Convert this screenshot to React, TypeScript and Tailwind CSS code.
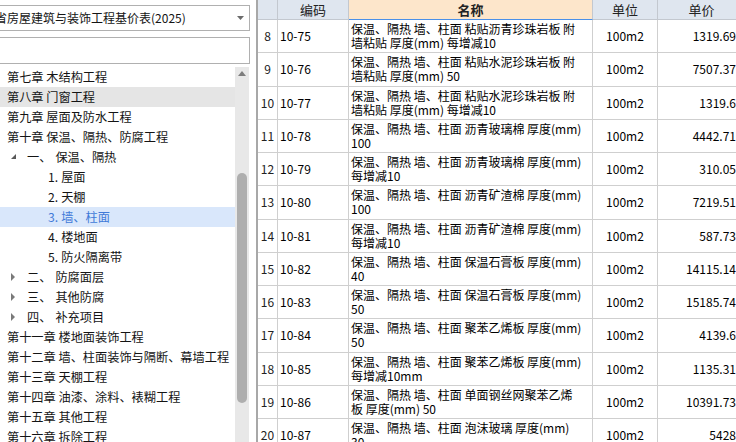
import React from "react";

type TreeItem = {
  text: string;
  num?: string;
  level: 0 | 1 | 2;
  state?: "open" | "closed";
  sel?: "hover" | "active";
};

const tree: TreeItem[] = [
  { text: "第七章 木结构工程", level: 0 },
  { text: "第八章 门窗工程", level: 0, sel: "hover" },
  { text: "第九章 屋面及防水工程", level: 0 },
  { text: "第十章 保温、隔热、防腐工程", level: 0 },
  { num: "一、", text: "保温、隔热", level: 1, state: "open" },
  { num: "1.", text: "屋面", level: 2 },
  { num: "2.", text: "天棚", level: 2 },
  { num: "3.", text: "墙、柱面", level: 2, sel: "active" },
  { num: "4.", text: "楼地面", level: 2 },
  { num: "5.", text: "防火隔离带", level: 2 },
  { num: "二、", text: "防腐面层", level: 1, state: "closed" },
  { num: "三、", text: "其他防腐", level: 1, state: "closed" },
  { num: "四、", text: "补充项目", level: 1, state: "closed" },
  { text: "第十一章 楼地面装饰工程", level: 0 },
  { text: "第十二章 墙、柱面装饰与隔断、幕墙工程", level: 0 },
  { text: "第十三章 天棚工程", level: 0 },
  { text: "第十四章 油漆、涂料、裱糊工程", level: 0 },
  { text: "第十五章 其他工程", level: 0 },
  { text: "第十六章 拆除工程", level: 0 },
];

const rows: [string, string, string, string, string][] = [
  ["8", "10-75", "保温、隔热 墙、柱面 粘贴沥青珍珠岩板 附", "墙粘贴 厚度(mm) 每增减10", "1319.69"],
  ["9", "10-76", "保温、隔热 墙、柱面 粘贴水泥珍珠岩板 附", "墙粘贴 厚度(mm) 50", "7507.37"],
  ["10", "10-77", "保温、隔热 墙、柱面 粘贴水泥珍珠岩板 附", "墙粘贴 厚度(mm) 每增减10", "1319.6"],
  ["11", "10-78", "保温、隔热 墙、柱面 沥青玻璃棉 厚度(mm)", "100", "4442.71"],
  ["12", "10-79", "保温、隔热 墙、柱面 沥青玻璃棉 厚度(mm)", "每增减10", "310.05"],
  ["13", "10-80", "保温、隔热 墙、柱面 沥青矿渣棉 厚度(mm)", "100", "7219.51"],
  ["14", "10-81", "保温、隔热 墙、柱面 沥青矿渣棉 厚度(mm)", "每增减10", "587.73"],
  ["15", "10-82", "保温、隔热 墙、柱面 保温石膏板 厚度(mm)", "40", "14115.14"],
  ["16", "10-83", "保温、隔热 墙、柱面 保温石膏板 厚度(mm)", "50", "15185.74"],
  ["17", "10-84", "保温、隔热 墙、柱面 聚苯乙烯板 厚度(mm)", "50", "4139.6"],
  ["18", "10-85", "保温、隔热 墙、柱面 聚苯乙烯板 厚度(mm)", "每增减10mm", "1135.31"],
  ["19", "10-86", "保温、隔热 墙、柱面 单面钢丝网聚苯乙烯", "板 厚度(mm) 50", "10391.73"],
  ["20", "10-87", "保温、隔热 墙、柱面 泡沫玻璃 厚度(mm)", "30", "5428"],
];

function Tri({ state }: { state: "open" | "closed" }) {
  if (state === "open") {
    return (
      <svg width="6" height="6" viewBox="0 0 6 6" className="absolute left-[11px] top-[7px]">
        <polygon points="5,0 5,5 0,5" fill="#595959" />
      </svg>
    );
  }
  return (
    <svg width="5" height="8" viewBox="0 0 5 8" className="absolute left-[11px] top-[6px]">
      <polygon points="0,0 4,4 0,8" fill="#7a7a7a" />
    </svg>
  );
}

function TreeRow({ item }: { item: TreeItem }) {
  const bg =
    item.sel === "hover" ? "bg-[#e5e5e5]" : item.sel === "active" ? "bg-[#d9e7fb]" : "";
  const color = item.sel === "active" ? "text-[#3f7ad8]" : "text-[#141414]";
  return (
    <div className={`relative h-[20px] leading-[20px] whitespace-nowrap ${bg} ${color}`}>
      {item.level === 0 && <span className="pl-[7px]">{item.text}</span>}
      {item.level === 1 && (
        <>
          {item.state && <Tri state={item.state} />}
          <span className="pl-[27px]">{item.num}</span>
          <span className="pl-[4px]">{item.text}</span>
        </>
      )}
      {item.level === 2 && (
        <>
          <span className="pl-[48px]">{item.num}</span>
          <span className="pl-[3px]">{item.text}</span>
        </>
      )}
    </div>
  );
}

export default function App() {
  return (
    <div className="w-[736px] h-[442px] flex overflow-hidden bg-white">
      {/* Left panel */}
      <div className="w-[256px] shrink-0 flex flex-col overflow-hidden font-['Noto_Sans_CJK_SC',sans-serif] text-[12px]">
        <div className="w-[250px] pt-[5px] overflow-hidden">
          <div className="relative -ml-[40px] w-[290px] h-[26px] border border-[#b0b0b0] bg-white flex items-center pl-[10px] text-[#141414] text-[12px] whitespace-nowrap">
            湖南省房屋建筑与装饰工程基价表(2025)
            <svg width="7" height="4" viewBox="0 0 7 4" className="absolute right-[5px] top-[10px]">
              <polygon points="0,0 7,0 3.5,4" fill="#6b6b6b" />
            </svg>
          </div>
          <div className="mt-[6px] -ml-[10px] w-[260px] h-[27px] border border-[#b0b0b0] bg-white" />
        </div>
        <div className="mt-[3px] flex flex-1 min-h-0 w-[250px]">
          <div className="w-[235px] flex flex-col text-[12.2px]">
            {tree.map((it, i) => (
              <TreeRow key={i} item={it} />
            ))}
          </div>
          <div className="w-[14px] bg-[#e8e8e8] flex flex-col items-center">
            <svg width="8" height="5" viewBox="0 0 8 5" className="mt-[4px]">
              <polygon points="0,5 8,5 4,0" fill="#7d7d7d" />
            </svg>
            <div className="mt-[97px] w-[10px] h-[230px] rounded-full bg-[#aeaeae]" />
          </div>
        </div>
      </div>

      {/* Table */}
      <div className="flex-1 overflow-hidden border-l-2 border-[#a8a8a8] font-['Noto_Sans_CJK_SC',sans-serif]">
        <div className="w-[490px]">
          <div className="grid grid-cols-[20px_71px_244px_65px_90px] h-[20px] text-[13px] leading-[19px] text-[#222]">
            <div className="bg-[#dfe6ef] border-r border-b border-[#c3c8cf]" />
            <div className="bg-[#dfe6ef] border-r border-b border-[#c3c8cf] text-center">编码</div>
            <div className="bg-[#fde6cb] border-r border-[#c3c8cf] border-b border-b-[#4a90e8] text-center font-bold">名称</div>
            <div className="bg-[#dfe6ef] border-r border-b border-[#c3c8cf] text-center">单位</div>
            <div className="bg-[#dfe6ef] border-b border-[#c3c8cf] text-center pr-[3px]">单价</div>
          </div>
          {rows.map((r) => (
            <div
              key={r[0]}
              className="grid grid-cols-[20px_71px_244px_65px_90px] h-[33.25px] text-[12px] leading-[14px] text-black"
            >
              <div className="border-r border-b border-[#cfcfcf] flex items-center justify-center text-[#222]">{r[0]}</div>
              <div className="border-r border-b border-[#cfcfcf] flex items-center pl-[2px]">{r[1]}</div>
              <div className="border-r border-b border-[#cfcfcf] flex flex-col justify-center pl-[2px] whitespace-nowrap overflow-hidden">
                <span>{r[2]}</span>
                <span>{r[3]}</span>
              </div>
              <div className="border-r border-b border-[#cfcfcf] flex items-center justify-center">100m2</div>
              <div className="border-b border-[#cfcfcf] flex items-center justify-end pr-[12px]">{r[4]}</div>
            </div>
          ))}
        </div>
      </div>
    </div>
  );
}
